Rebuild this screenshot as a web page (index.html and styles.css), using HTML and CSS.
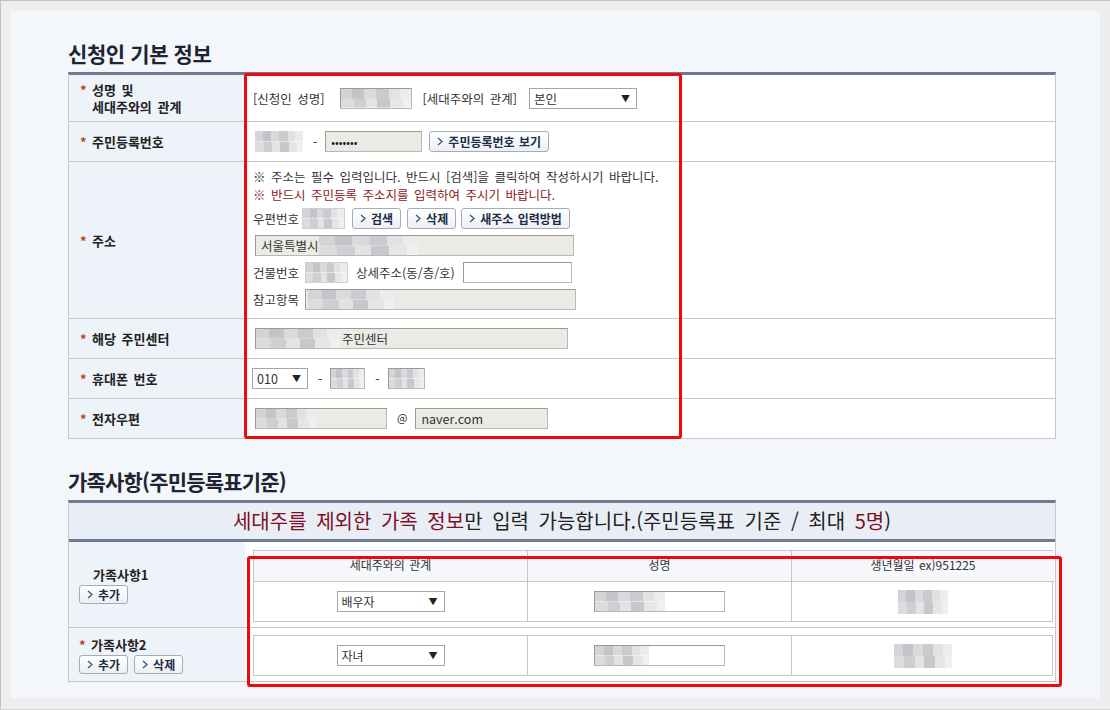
FILE: index.html
```html
<!DOCTYPE html>
<html lang="ko">
<head>
<meta charset="utf-8">
<title>신청인 기본 정보</title>
<link rel="stylesheet" href="styles.css">
</head>
<body>
<div class="frame">
  <div class="content">
    <h2 class="title">신청인 기본 정보</h2>
    <div class="form">
      <div class="row r1">
        <div class="lab"><div><span class="req">*</span>성명 및</div><div class="ind">세대주와의 관계</div></div>
        <div class="val">
          <span class="t">[신청인 성명]</span>
          <span class="inp mz w72 ml16"></span>
          <span class="t ml10">[세대주와의 관계]</span>
          <span class="sel w108 ml12"><span>본인</span><span class="arr">▼</span></span>
        </div>
      </div>
      <div class="row r40">
        <div class="lab"><span class="req">*</span>주민등록번호</div>
        <div class="val">
          <span class="inp mz w48 ml2 nob"></span>
          <span class="t dash">-</span>
          <span class="inp gray w97"><span class="dots">•••••••</span></span>
          <button class="btn ml7"><svg class="chev" viewBox="0 0 6 9" width="6" height="9"><path d="M1 1L5 4.5L1 8"/></svg>주민등록번호 보기</button>
        </div>
      </div>
      <div class="row r157">
        <div class="lab"><span class="req">*</span>주소</div>
        <div class="val col">
          <div class="ln">※ 주소는 필수 입력입니다. 반드시 [검색]을 클릭하여 작성하시기 바랍니다.</div>
          <div class="ln warn">※ 반드시 주민등록 주소지를 입력하여 주시기 바랍니다.</div>
          <div class="line l3">
            <span class="t">우편번호</span>
            <span class="inp w43 ml3 soft"><span class="mz mzfill"></span></span>
            <button class="btn ml7"><svg class="chev" viewBox="0 0 6 9" width="6" height="9"><path d="M1 1L5 4.5L1 8"/></svg>검색</button>
            <button class="btn ml6"><svg class="chev" viewBox="0 0 6 9" width="6" height="9"><path d="M1 1L5 4.5L1 8"/></svg>삭제</button>
            <button class="btn ml5"><svg class="chev" viewBox="0 0 6 9" width="6" height="9"><path d="M1 1L5 4.5L1 8"/></svg>새주소 입력방법</button>
          </div>
          <div class="line l4">
            <span class="inp gray w319 ml2"><span class="it">서울특별시</span><span class="mz mzl w100"></span></span>
          </div>
          <div class="line l5">
            <span class="t">건물번호</span>
            <span class="inp w43 ml6 soft"><span class="mz mzfill"></span></span>
            <span class="t ml8">상세주소(동/층/호)</span>
            <span class="inp white w109 ml8"></span>
          </div>
          <div class="line l5">
            <span class="t">참고항목</span>
            <span class="inp gray w271 ml6"><span class="mz mzl w86 ml2"></span></span>
          </div>
        </div>
      </div>
      <div class="row r40">
        <div class="lab"><span class="req">*</span>해당 주민센터</div>
        <div class="val">
          <span class="inp gray w313 ml2"><span class="mz mzl w84"></span><span class="it2">주민센터</span></span>
        </div>
      </div>
      <div class="row r40">
        <div class="lab"><span class="req">*</span>휴대폰 번호</div>
        <div class="val">
          <span class="sel w56 mln1"><span>010</span><span class="arr">▼</span></span>
          <span class="t dash">-</span>
          <span class="inp white w35"><span class="mz mzfill"></span></span>
          <span class="t dash">-</span>
          <span class="inp white w37"><span class="mz mzfill"></span></span>
        </div>
      </div>
      <div class="row r40">
        <div class="lab"><span class="req">*</span>전자우편</div>
        <div class="val">
          <span class="inp gray w132 ml2"><span class="mz mzl w60"></span></span>
          <span class="t at">@</span>
          <span class="inp gray w133"><span class="it">naver.com</span></span>
        </div>
      </div>
    </div>

    <h2 class="title t2">가족사항(주민등록표기준)</h2>
    <div class="form fam">
      <div class="banner"><span class="em">세대주를 제외한 가족 정보</span>만 입력 가능합니다.(주민등록표 기준 / 최대 <span class="em">5명</span>)</div>
      <div class="row fa">
        <div class="lab flab">
          <div class="ind2">가족사항1</div>
          <div class="btns"><button class="btn"><svg class="chev" viewBox="0 0 6 9" width="6" height="9"><path d="M1 1L5 4.5L1 8"/></svg>추가</button></div>
        </div>
        <div class="val fval">
          <div class="sub">
            <div class="hc">세대주와의 관계</div>
            <div class="hc">성명</div>
            <div class="hc">생년월일 ex)951225</div>
            <div class="dc"><span class="sel w108"><span>배우자</span><span class="arr">▼</span></span></div>
            <div class="dc"><span class="inp white w131"><span class="mz mzl w70"></span></span></div>
            <div class="dc"><span class="mz dob"></span></div>
          </div>
        </div>
      </div>
      <div class="row fb">
        <div class="lab flab">
          <div><span class="req">*</span>가족사항2</div>
          <div class="btns"><button class="btn"><svg class="chev" viewBox="0 0 6 9" width="6" height="9"><path d="M1 1L5 4.5L1 8"/></svg>추가</button><button class="btn ml6"><svg class="chev" viewBox="0 0 6 9" width="6" height="9"><path d="M1 1L5 4.5L1 8"/></svg>삭제</button></div>
        </div>
        <div class="val fval fvalb">
          <div class="sub">
            <div class="dc first"><span class="sel w108"><span>자녀</span><span class="arr">▼</span></span></div>
            <div class="dc first"><span class="inp white w131"><span class="mz mzl w54"></span></span></div>
            <div class="dc first"><span class="mz dob dob2"></span></div>
          </div>
        </div>
      </div>
    </div>

    <div class="mark m1"></div>
    <div class="mark m2"></div>
  </div>
</div>
</body>
</html>
```

FILE: styles.css
```css
* { box-sizing: border-box; }
html, body { margin: 0; padding: 0; background: #ffffff; }
body {
  font-family: "Noto Sans CJK KR", "Noto Sans", sans-serif;
  font-size: 12.5px;
  color: #333;
}
.frame {
  width: 1110px;
  height: 710px;
  border-left: 1px solid #c2c2c2;
  border-top: 1px solid #c2c2c2;
  border-bottom: 1px solid #d6d6d6;
  background: #eeeeee;
  padding: 10px 10px 11px 10px;
}
.content {
  position: relative;
  height: 100%;
  background: #f3f6fa;
  padding: 28px 0 0 57px;
}
.title {
  margin: 0 0 5px 0;
  font-size: 21px;
  line-height: 28px;
  font-weight: 700;
  color: #1e2432;
  letter-spacing: -0.4px;
  word-spacing: 0;
}
.t2 { margin-top: 28px; letter-spacing: -0.8px; word-spacing: 0; }

.form {
  width: 988px;
  border-top: 3px solid #6c7a92;
  border-left: 1px solid #c6c6c6;
  border-right: 1px solid #c6c6c6;
  background: #ffffff;
}
.row {
  display: flex;
  border-bottom: 1px solid #c6c6c6;
}
.r1 { height: 47px; }
.r40 { height: 40px; }
.r157 { height: 157px; }
.lab {
  width: 176px;
  flex: none;
  background: #eef2f9;
  padding-left: 11px;
  font-size: 13px;
  font-weight: 700;
  color: #222;
  line-height: 17px;
  display: flex;
  flex-direction: column;
  justify-content: center;
  word-spacing: 2px;
}
.r40 .lab, .r157 .lab { flex-direction: row; align-items: center; justify-content: flex-start; }
.req {
  display: inline-block;
  width: 12px;
  color: #b5461f;
  font-weight: 700;
}
.ind { padding-left: 12px; }
.val {
  flex: 1;
  display: flex;
  align-items: center;
  padding-left: 8px;
  word-spacing: 2px;
}
.val.col {
  flex-direction: column;
  align-items: flex-start;
  justify-content: flex-start;
  padding-top: 6px;
}
.ln { line-height: 18px; color: #333; }
.warn { color: #8c2020; }
.line { display: flex; align-items: center; }
.l3 { margin-top: 4px; height: 21px; }
.l4 { margin-top: 6px; height: 21px; }
.l5 { margin-top: 6px; height: 21px; }
.t { white-space: nowrap; color: #333; }
.dash { margin: 0 8px 0 10px; }
.at { margin: 0 8px 0 10px; font-size: 11px; position: relative; top: -2px; }

.inp {
  display: inline-flex;
  align-items: center;
  height: 21px;
  border: 1px solid #b8b8b8;
  border-top-color: #9a9a9a;
  border-left-color: #9a9a9a;
  background: #fff;
  overflow: hidden;
  flex: none;
}
.inp.nob { border: none; }
.inp.soft { border-color: #d0d0d0; }
.gray { background: #ebeae4; }
.white { background: #ffffff; }
.dots { padding-left: 5px; font-size: 11px; letter-spacing: 0; color: #222; }
.it { padding-left: 5px; color: #333; }
.it2 { padding-left: 2px; color: #333; }

.mz {
  display: inline-block;
  height: 19px;
  background:
    linear-gradient(90deg, #d4d4d8 0 16%, #c3c3c8 16% 33%, #dadadd 33% 50%, #cbcbcf 50% 68%, #e2e2e4 68% 84%, #ececee 84% 100%) top / 100% 50% no-repeat,
    linear-gradient(90deg, #dcdcdf 0 18%, #cfcfd3 18% 36%, #e3e3e5 36% 52%, #c8c8cc 52% 70%, #e6e6e8 70% 88%, #f0f0f1 88% 100%) bottom / 100% 50% no-repeat;
}
.inp.mz { height: 21px; }
.mzfill { width: 100%; height: 100%; }
.mzl { height: 19px; }
.dob { width: 50px; height: 24px; }
.dob2 { width: 58px; }

.sel {
  display: inline-flex;
  align-items: center;
  justify-content: space-between;
  height: 21px;
  border: 1px solid #a6a6a6;
  background: #fff;
  padding: 0 6px 0 4px;
  color: #333;
  flex: none;
}
.arr { font-size: 9px; color: #222; }

.btn {
  display: inline-flex;
  align-items: center;
  height: 21px;
  padding: 0 7px 0 7px;
  border: 1px solid #a4acb8;
  border-radius: 3px;
  background: linear-gradient(#ffffff, #eceff3);
  font-family: "Noto Sans CJK KR", "Noto Sans", sans-serif;
  font-size: 12px;
  font-weight: 700;
  color: #1c2d48;
  white-space: nowrap;
  word-spacing: 1px;
  cursor: pointer;
  flex: none;
}
.chev { margin-right: 5px; flex: none; }
.chev path { fill: none; stroke: #2f5a82; stroke-width: 1.3; }

.w35 { width: 35px; } .w37 { width: 37px; } .w43 { width: 43px; }
.w48 { width: 48px; } .w54 { width: 54px; } .w56 { width: 56px; } .w60 { width: 60px; }
.w70 { width: 70px; } .w72 { width: 72px; } .w84 { width: 84px; } .w86 { width: 86px; }
.w97 { width: 97px; } .w100 { width: 100px; } .w108 { width: 108px; } .w109 { width: 109px; }
.w131 { width: 131px; } .w132 { width: 132px; } .w133 { width: 133px; }
.w271 { width: 271px; } .w313 { width: 313px; } .w319 { width: 319px; }
.ml2 { margin-left: 2px; } .ml3 { margin-left: 3px; } .ml5 { margin-left: 5px; } .ml6 { margin-left: 6px; }
.ml7 { margin-left: 7px; } .ml8 { margin-left: 8px; } .ml10 { margin-left: 10px; }
.ml12 { margin-left: 12px; } .ml16 { margin-left: 16px; } .mln1 { margin-left: -1px; }

/* family table */
.fam { border-bottom: 0; }
.banner {
  height: 39px;
  background: #e9eef6;
  border-bottom: 3px solid #6c7a92;
  text-align: center;
  font-size: 20px;
  line-height: 36px;
  color: #222;
  word-spacing: 4px;
}
.em { color: #7c1022; }
.fa { height: 86px; }
.fb { height: 54px; }
.flab { padding-left: 10px; }
.ind2 { padding-left: 14px; }
.btns { display: flex; margin-top: 2px; }
.btns .btn { height: 19px; }
.fval {
  align-items: flex-start;
  padding: 8px 0 0 8px;
}
.fvalb { padding-top: 7px; }
.sub {
  width: 800px;
  display: grid;
  grid-template-columns: 273px 264px 263px;
  border: 1px solid #c6c6c6;
  word-spacing: 1px;
  font-size: 12px;
}
.hc {
  height: 31px;
  background: #f5f7fb;
  border-bottom: 1px solid #c6c6c6;
  border-left: 1px solid #c6c6c6;
  display: flex;
  align-items: center;
  justify-content: center;
  color: #333;
  padding-bottom: 4px;
}
.dc {
  height: 39px;
  border-left: 1px solid #c6c6c6;
  display: flex;
  align-items: center;
  justify-content: center;
}
.hc:first-child, .dc:nth-child(4), .dc.first:first-child { border-left: none; }

/* red annotation boxes */
.mark {
  position: absolute;
  border: 3px solid #ee0a0a;
  border-radius: 3px;
  pointer-events: none;
}
.m1 { left: 233px; top: 62px; width: 438px; height: 366px; }
.m2 { left: 236px; top: 545px; width: 815px; height: 131px; }
```
